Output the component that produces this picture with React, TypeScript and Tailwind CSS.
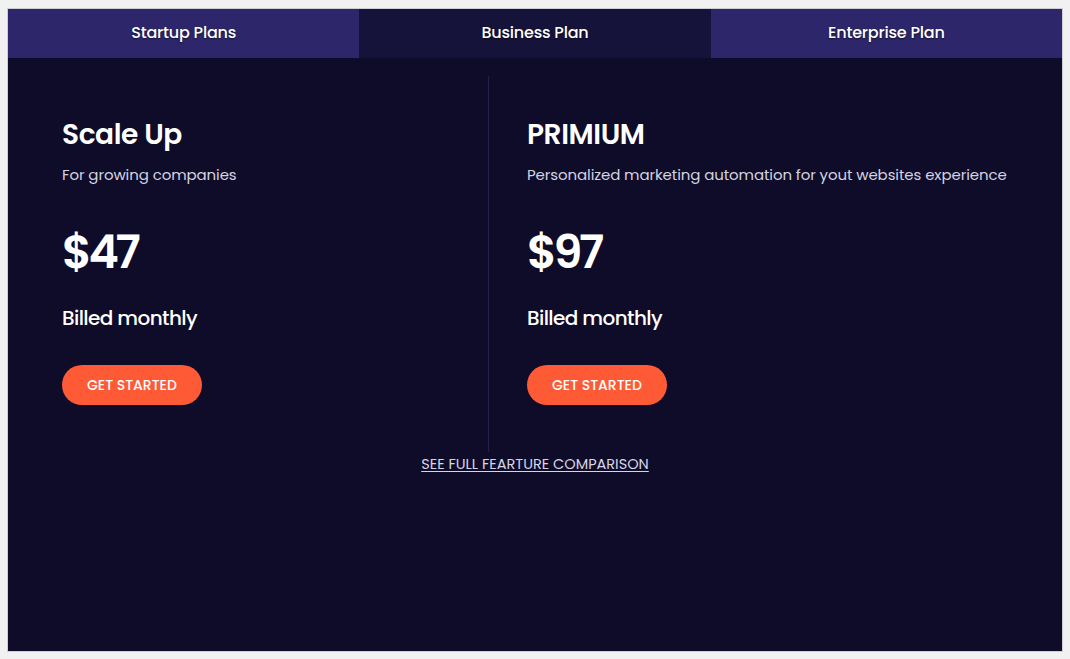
export default function App() {
  const plans = [
    {
      title: "Scale Up",
      subtitle: "For growing companies",
      price: "$47",
    },
    {
      title: "PRIMIUM",
      subtitle: "Personalized marketing automation for yout websites experience",
      price: "$97",
    },
  ]

  return (
    <div
      className="h-screen bg-[#f1f1f1] pt-[8px] pb-[7px] px-[7px]"
      style={{ fontFamily: "Poppins, 'Open Sans', sans-serif" }}
    >
      <div className="h-full flex flex-col bg-[#0f0c29] border border-[#cdcdd4]">
        {/* tabs */}
        <div className="grid grid-cols-3 h-[49px] text-white text-[16px] font-medium tracking-[-0.2px]">
          <button className="bg-[#2d266b] pb-[2px] [text-shadow:0_1px_2px_rgba(0,0,0,0.6)]">Startup Plans</button>
          <button className="bg-[#16133a] pb-[2px] [text-shadow:0_1px_2px_rgba(0,0,0,0.6)]">Business Plan</button>
          <button className="bg-[#2d266b] pb-[2px] [text-shadow:0_1px_2px_rgba(0,0,0,0.6)]">Enterprise Plan</button>
        </div>

        <div className="flex mt-[18px]">
          {plans.map((plan, i) => (
            <div
              key={plan.title}
              className={
                i === 0
                  ? "w-[481px] pl-[54px] pt-[38px] pb-[47px] border-r border-[#221f48]"
                  : "flex-1 pl-[38px] pt-[38px] pb-[47px]"
              }
            >
              <h2 className="text-white text-[28px] leading-[42px] font-semibold tracking-[-0.4px]">{plan.title}</h2>
              <p className="mt-[7px] text-[#d4d3e0] text-[15px] leading-[24px] tracking-[-0.1px]">{plan.subtitle}</p>
              <div className="mt-[33px] text-white text-[46px] leading-[64px] font-semibold tracking-[-3.5px]">
                {plan.price}
              </div>
              <div className="mt-[19px] text-white text-[20px] leading-[30px] font-medium tracking-[-0.6px]">
                Billed monthly
              </div>
              <button className="mt-[32px] h-[40px] px-[25px] rounded-full bg-[#ff5a36] text-white text-[14px] font-medium">
                GET STARTED
              </button>
            </div>
          ))}
        </div>

        <div className="text-center">
          <a href="#" className="text-[#d6d5e4] text-[14.5px] leading-[20px] underline underline-offset-2">
            SEE FULL FEARTURE COMPARISON
          </a>
        </div>
      </div>
    </div>
  )
}
